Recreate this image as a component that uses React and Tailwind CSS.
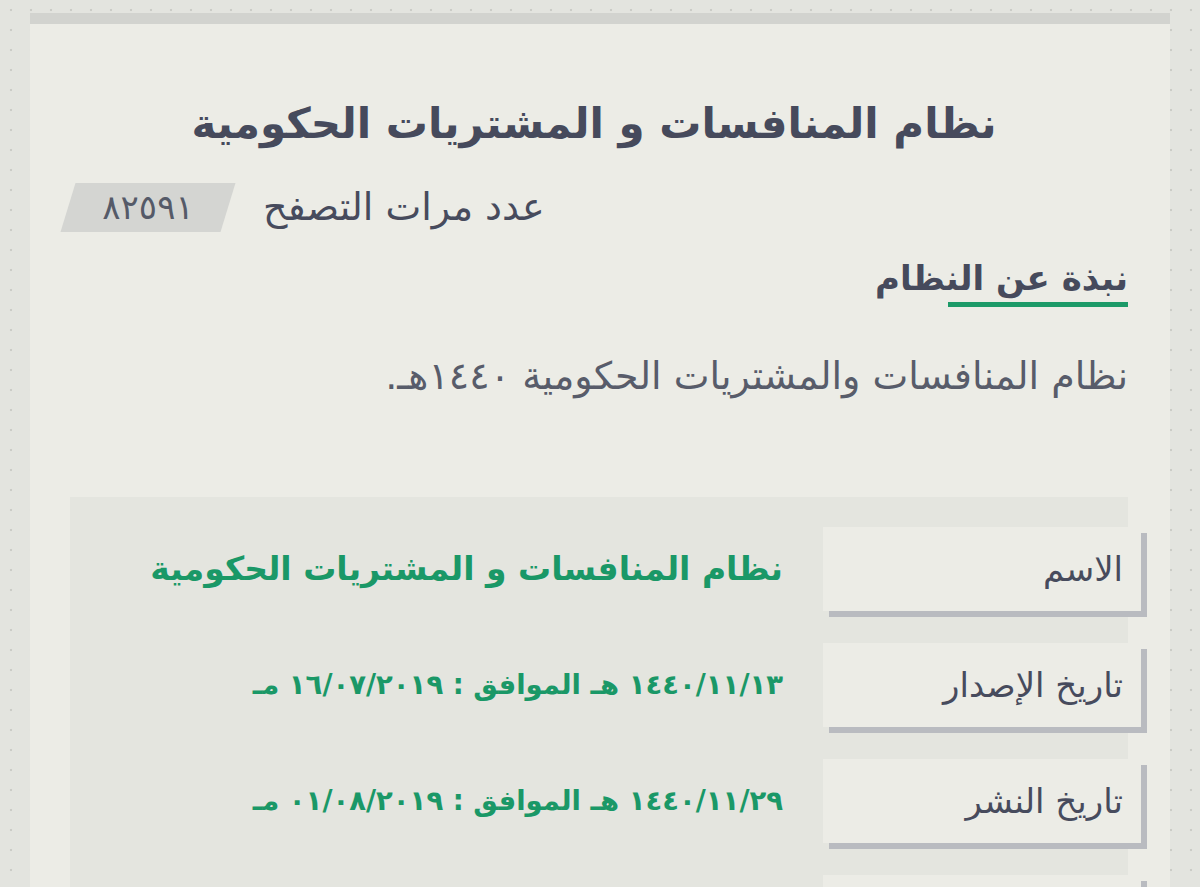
import React from 'react';

const rows = [
  { label: 'الاسم', value: 'نظام المنافسات و المشتريات الحكومية', size: 'text-[33px]' },
  { label: 'تاريخ الإصدار', value: '١٤٤٠/١١/١٣ هـ الموافق : ١٦/٠٧/٢٠١٩ مـ', size: 'text-[27.5px]' },
  { label: 'تاريخ النشر', value: '١٤٤٠/١١/٢٩ هـ الموافق : ٠١/٠٨/٢٠١٩ مـ', size: 'text-[27.5px]' },
  { label: '', value: '', size: 'text-[27px]' },
];

function InfoRow({ label, value, size }) {
  return (
    <div className="flex items-center">
      <div className="-mr-[13px] flex h-[84px] w-[318px] shrink-0 items-center bg-[#ecece6] pr-[18px] shadow-[6px_6px_0_#b9bbc0]">
        <span className="text-[34px] text-[#474b5d]">{label}</span>
      </div>
      <div className={`pr-[40px] font-bold text-[#1a9867] ${size}`}>{value}</div>
    </div>
  );
}

export default function App() {
  return (
    <div
      dir="rtl"
      className="h-[887px] overflow-hidden bg-[#e3e4df] bg-[radial-gradient(circle,#cbccc7_1px,transparent_1.6px)] bg-[size:20px_20px] bg-[position:1px_0px] px-[30px] pt-[13px]"
      style={{ fontFamily: '"DejaVu Sans", sans-serif' }}
    >
      <div className="h-[11px] bg-[#d2d3cf]" />
      <div className="min-h-[900px] bg-[#ecece6] pl-[30px] pr-[42px] pt-[70px]">
        <h1 className="text-center text-[42px] font-bold leading-[60px] text-[#464a5c]">
          نظام المنافسات و المشتريات الحكومية
        </h1>

        <div className="mt-[28px] flex items-center justify-end gap-[35px]">
          <span className="text-[38px] leading-[50px] text-[#474b5d]">عدد مرات التصفح</span>
          <div className="relative ml-[8px] flex h-[49px] w-[160px] items-center justify-center">
            <div className="absolute inset-0 -skew-x-[17deg] bg-[#d4d5d2]" />
            <span className="relative text-[34px] leading-[49px] text-[#555a68]">٨٢٥٩١</span>
          </div>
        </div>

        <div className="mt-[24px] flex flex-col items-start">
          <h2 className="text-[34px] font-bold leading-[44px] text-[#464a5c]">نبذة عن النظام</h2>
          <div className="mt-[2px] h-[5px] w-[180px] bg-[#1c9a68]" />
        </div>

        <p className="mt-[44px] text-[38px] leading-[50px] text-[#585c6a]">
          نظام المنافسات والمشتريات الحكومية ١٤٤٠هـ.
        </p>

        <div className="ml-[10px] mt-[96px] flex flex-col gap-[32px] bg-[#e4e5df] pb-[30px] pt-[30px]">
          {rows.map((r, i) => (
            <InfoRow key={i} label={r.label} value={r.value} size={r.size} />
          ))}
        </div>
      </div>
    </div>
  );
}
